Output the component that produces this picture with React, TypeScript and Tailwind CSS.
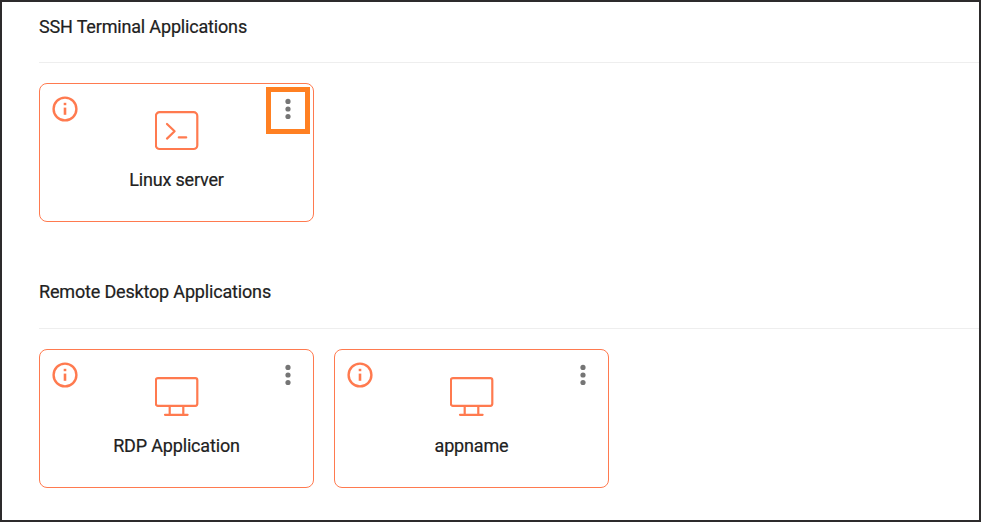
import type { ReactNode } from "react";

function InfoIcon() {
  return (
    <svg width="26" height="26" viewBox="0 0 26 26" fill="none" stroke="#ff7a4f">
      <circle cx="13" cy="13" r="11.4" strokeWidth="2.4" />
      <path d="M13 11.6v7.2" strokeWidth="2.6" />
      <path d="M13 6.8v2.4" strokeWidth="2.6" />
    </svg>
  );
}

function MoreIcon() {
  return (
    <svg width="8" height="22" viewBox="0 0 8 22" fill="#757575">
      <circle cx="4" cy="3.4" r="2.6" />
      <circle cx="4" cy="11" r="2.6" />
      <circle cx="4" cy="18.5" r="2.6" />
    </svg>
  );
}

function TerminalIcon() {
  return (
    <svg width="44" height="40" viewBox="0 0 44 40" fill="none" stroke="#ff7a4f" strokeWidth="2.2" strokeLinecap="round" strokeLinejoin="round">
      <rect x="0.9" y="1.1" width="41.4" height="36.9" rx="3.8" />
      <path d="M12 13l7.6 7.3-7.6 7.3" />
      <path d="M23.8 26.4h7.4" />
    </svg>
  );
}

function MonitorIcon() {
  return (
    <svg width="44" height="40" viewBox="0 0 44 40" fill="none" stroke="#ff7a4f" strokeWidth="2.2" strokeLinecap="round" strokeLinejoin="round">
      <rect x="0.9" y="1.2" width="41.4" height="27.6" rx="2" />
      <path d="M14.7 29v8.8M28.3 29v8.8M10 37.8h22.6" />
    </svg>
  );
}

function AppCard({ name, icon, highlighted = false }: { name: string; icon: ReactNode; highlighted?: boolean }) {
  return (
    <div className="flex h-[139px] w-[275px] flex-col rounded-lg border border-[#ff7a4f]">
      <div className="flex h-[66px] items-start justify-between pl-3 pr-[3px] pt-[3px]">
        <div className="mt-[9px]">
          <InfoIcon />
        </div>
        <div className="mt-6 pl-[9px]">{icon}</div>
        <button
          aria-label="More options"
          className={`flex h-[47px] w-11 justify-center border-[5px] pt-[6px] ${highlighted ? "border-[#ff8022]" : "border-transparent"}`}
        >
          <MoreIcon />
        </button>
      </div>
      <div className="mt-[18px] text-center text-[18px] leading-6 tracking-[-0.17px] [-webkit-text-stroke:0.2px]">{name}</div>
    </div>
  );
}

function Section({ title, children }: { title: string; children: ReactNode }) {
  return (
    <section className="group h-[266px] pl-[37px]">
      <h2 className="h-[61px] border-b border-[#eeeeee] pt-[13px] text-[18px] font-normal leading-6 tracking-[-0.17px] [-webkit-text-stroke:0.2px] group-last:pt-3">
        {title}
      </h2>
      <div className="mt-5 flex gap-5">{children}</div>
    </section>
  );
}

export default function App() {
  return (
    <main className="h-[522px] w-[981px] overflow-hidden border-2 border-[#2d2b2c] bg-white font-[Roboto,sans-serif] text-[#212121]">
      <Section title="SSH Terminal Applications">
        <AppCard name="Linux server" icon={<TerminalIcon />} highlighted />
      </Section>
      <Section title="Remote Desktop Applications">
        <AppCard name="RDP Application" icon={<MonitorIcon />} />
        <AppCard name="appname" icon={<MonitorIcon />} />
      </Section>
    </main>
  );
}
